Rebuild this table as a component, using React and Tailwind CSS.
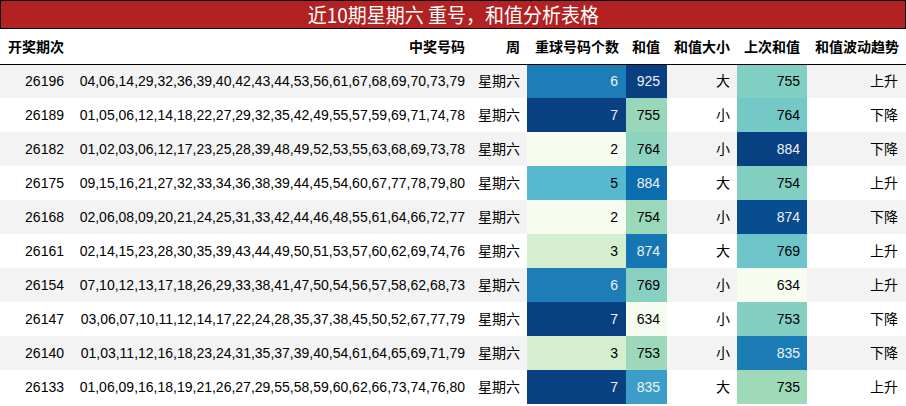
import React from "react";

const rows = [
  { id: "26196", nums: "04,06,14,29,32,36,39,40,42,43,44,53,56,61,67,68,69,70,73,79", count: 6, sum: 925, size: "大", last: 755, trend: "上升" },
  { id: "26189", nums: "01,05,06,12,14,18,22,27,29,32,35,42,49,55,57,59,69,71,74,78", count: 7, sum: 755, size: "小", last: 764, trend: "下降" },
  { id: "26182", nums: "01,02,03,06,12,17,23,25,28,39,48,49,52,53,55,63,68,69,73,78", count: 2, sum: 764, size: "小", last: 884, trend: "下降" },
  { id: "26175", nums: "09,15,16,21,27,32,33,34,36,38,39,44,45,54,60,67,77,78,79,80", count: 5, sum: 884, size: "大", last: 754, trend: "上升" },
  { id: "26168", nums: "02,06,08,09,20,21,24,25,31,33,42,44,46,48,55,61,64,66,72,77", count: 2, sum: 754, size: "小", last: 874, trend: "下降" },
  { id: "26161", nums: "02,14,15,23,28,30,35,39,43,44,49,50,51,53,57,60,62,69,74,76", count: 3, sum: 874, size: "大", last: 769, trend: "上升" },
  { id: "26154", nums: "07,10,12,13,17,18,26,29,33,38,41,47,50,54,56,57,58,62,68,73", count: 6, sum: 769, size: "小", last: 634, trend: "上升" },
  { id: "26147", nums: "03,06,07,10,11,12,14,17,22,24,28,35,37,38,45,50,52,67,77,79", count: 7, sum: 634, size: "小", last: 753, trend: "下降" },
  { id: "26140", nums: "01,03,11,12,16,18,23,24,31,35,37,39,40,54,61,64,65,69,71,79", count: 3, sum: 753, size: "小", last: 835, trend: "下降" },
  { id: "26133", nums: "01,06,09,16,18,19,21,26,27,29,55,58,59,60,62,66,73,74,76,80", count: 7, sum: 835, size: "大", last: 735, trend: "上升" },
];

// GnBu colour stops, as in the pandas background gradient
const stops = [
  [247, 252, 240], [224, 243, 219], [204, 235, 197], [168, 221, 181], [123, 204, 196],
  [78, 179, 211], [43, 140, 190], [8, 104, 172], [8, 64, 129],
];

function gnbu(t) {
  const x = Math.min(1, Math.max(0, t)) * (stops.length - 1);
  const i = Math.min(stops.length - 2, Math.floor(x));
  const f = x - i;
  return stops[i].map((c, k) => Math.round(c + (stops[i + 1][k] - c) * f));
}

function luminance([r, g, b]) {
  const ch = (c) => {
    c = c / 255;
    return c <= 0.03928 ? c / 12.92 : Math.pow((c + 0.055) / 1.055, 2.4);
  };
  return 0.2126 * ch(r) + 0.7152 * ch(g) + 0.0722 * ch(b);
}

function cellStyle(v, min, max) {
  const rgb = gnbu((v - min) / (max - min));
  return {
    backgroundColor: `rgb(${rgb.join(",")})`,
    color: luminance(rgb) < 0.405 ? "#f1f1f1" : "#000000",
  };
}

function range(key) {
  const vals = rows.map((r) => r[key]);
  return [Math.min(...vals), Math.max(...vals)];
}

const headers = ["开奖期次", "中奖号码", "周", "重球号码个数", "和值", "和值大小", "上次和值", "和值波动趋势"];

export default function App() {
  const [cMin, cMax] = range("count");
  const [sMin, sMax] = range("sum");
  const [lMin, lMax] = range("last");

  return (
    <div className="w-[906px] h-[406px] bg-white overflow-hidden font-['Liberation_Sans','Noto_Sans_CJK_SC',sans-serif] text-black">
      <div className="h-[29px] bg-[#b22222] border border-black flex items-center justify-center text-white text-[20px] leading-none font-['Noto_Sans_CJK_SC',sans-serif]">
        <span className="scale-x-95">近10期星期六 重号，和值分析表格</span>
      </div>
      <table className="table-fixed border-collapse w-[906px] text-[14px]">
        <colgroup>
          <col className="w-[71px]" />
          <col className="w-[401px]" />
          <col className="w-[55px]" />
          <col className="w-[99px]" />
          <col className="w-[41px]" />
          <col className="w-[70px]" />
          <col className="w-[70px]" />
          <col className="w-[99px]" />
        </colgroup>
        <thead>
          <tr className="h-[35px] border-b border-black">
            {headers.map((h) => (
              <th key={h} className="text-right pr-[7px] font-bold whitespace-nowrap font-['Noto_Sans_CJK_SC',sans-serif]">
                {h}
              </th>
            ))}
          </tr>
        </thead>
        <tbody>
          {rows.map((r, i) => (
            <tr key={r.id} className={`h-[34px] ${i % 2 === 0 ? "bg-[#f3f3f3]" : "bg-white"}`}>
              <td className="text-right pr-[7px]">{r.id}</td>
              <td className="text-right pr-[7px] whitespace-nowrap">{r.nums}</td>
              <td className="text-right pr-[7px] whitespace-nowrap">星期六</td>
              <td className="text-right pr-[8px]" style={cellStyle(r.count, cMin, cMax)}>{r.count}</td>
              <td className="text-right pr-[7px]" style={cellStyle(r.sum, sMin, sMax)}>{r.sum}</td>
              <td className="text-right pr-[7px]">{r.size}</td>
              <td className="text-right pr-[7px]" style={cellStyle(r.last, lMin, lMax)}>{r.last}</td>
              <td className="text-right pr-[8px]">{r.trend}</td>
            </tr>
          ))}
        </tbody>
      </table>
    </div>
  );
}
